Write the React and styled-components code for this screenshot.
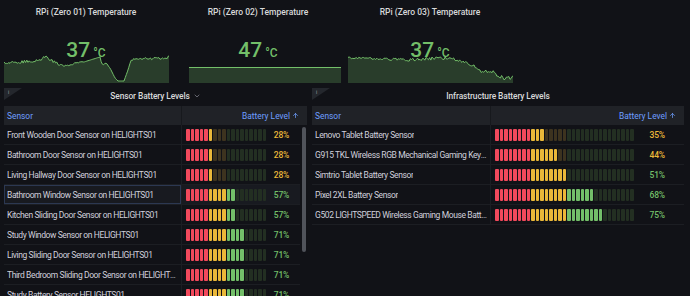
import styled, { createGlobalStyle } from "styled-components"
import { ArrowUp, ChevronDown } from "lucide-react"

const GlobalStyle = createGlobalStyle`
  html, body { margin:0; padding:0; background:#111217; }
  body { font-family: Roboto, "Liberation Sans", sans-serif; }
`

const Page = styled.div`
  width:690px;
  height:296px;
  overflow:hidden;
  background:#111217;
  color:#ccccdc;
  display:flex;
  flex-direction:column;
`
const StatRow = styled.div`
  display:flex;
  height:86px;
  flex-shrink:0;
`
const StatPanel = styled.div`
  width:172px;
  display:flex;
  flex-direction:column;
`
const StatTitle = styled.div`
  height:24px;
  display:flex;
  align-items:center;
  justify-content:center;
  font-size:8.5px;
  font-weight:500;
  color:#d8d9da;
`
const StatBody = styled.div`
  position:relative;
  flex:1;
  padding:0 3px 3px 4px;
  display:flex;
  align-items:flex-end;
`
const Spark = styled.svg`
  width:165px;
  height:31px;
  display:block;
`
const StatValue = styled.div`
  position:absolute;
  left:0;
  right:0;
  top:16px;
  text-align:center;
  color:#73bf69;
  font-size:21px;
  line-height:20px;
  font-weight:500;
`
const Unit = styled.span`
  font-size:12px;
  margin-left:3px;
`

const Bottom = styled.div`
  display:flex;
  gap:5px;
  padding-left:4px;
  flex:1;
  min-height:0;
`
const Panel = styled.div`
  position:relative;
  width:${(p) => p.$width}px;
  display:flex;
  flex-direction:column;
`
const PanelTitle = styled.div`
  height:20px;
  display:flex;
  align-items:center;
  justify-content:center;
  gap:3px;
  font-size:8.4px;
  font-weight:500;
  letter-spacing:-0.1px;
  color:#d8d9da;
`
const InfoCorner = styled.div`
  position:absolute;
  top:2px;
  left:0;
  width:18px;
  height:12px;
  background:#24272d;
  clip-path:polygon(0 0, 100% 0, 0 100%);
  font-size:5px;
  color:#9fa1a8;
  padding:2px 0 0 4px;
  box-sizing:border-box;
  line-height:5px;
`
const Header = styled.div`
  display:grid;
  grid-template-columns:${(p) => p.$first}px 1fr;
  height:19px;
  background:#202227;
  font-size:8.4px;
  color:#6e9fff;
`
const HeadCell = styled.div`
  display:flex;
  align-items:center;
  justify-content:${(p) => (p.$right ? "flex-end" : "flex-start")};
  gap:2px;
  padding:${(p) => (p.$right ? "0 8px 0 0" : "0 0 0 3px")};
  border-right:${(p) => (p.$right ? "none" : "1px solid #17191d")};
`
const Body = styled.div`
  display:flex;
  flex:1;
  min-height:0;
`
const Rows = styled.div`
  flex:1;
  display:flex;
  flex-direction:column;
`
const ScrollTrack = styled.div`
  width:7px;
  padding:2px 1px 0 2px;
  box-sizing:border-box;
`
const Thumb = styled.div`
  width:4px;
  height:125px;
  border-radius:2px;
  background:#50535a;
`
const Row = styled.div`
  display:grid;
  grid-template-columns:${(p) => p.$first}px 1fr;
  height:20px;
  flex-shrink:0;
  box-sizing:border-box;
  border-bottom:1px solid #1c1e23;
  background:${(p) => (p.$active ? "#181a20" : "transparent")};
  font-size:8.5px;
  letter-spacing:-0.4px;
`
const NameCell = styled.div`
  padding:0 3px;
  display:flex;
  align-items:center;
  border-right:1px solid #1c1e23;
  box-shadow:${(p) => (p.$active ? "inset 0 0 0 1px #2c3852" : "none")};
  min-width:0;
  color:#d0d0dc;
`
const NameText = styled.span`
  white-space:nowrap;
  overflow:hidden;
  text-overflow:ellipsis;
`
const GaugeCell = styled.div`
  display:flex;
  align-items:center;
  padding-left:4px;
`
const Cells = styled.div`
  display:flex;
  gap:1px;
`
const Cell = styled.div`
  width:3.5px;
  height:12px;
  border-radius:1px;
  background:${(p) => p.$color};
`
const Pct = styled.div`
  flex:1;
  text-align:center;
  padding-right:3px;
  font-size:8.5px;
  font-weight:500;
  letter-spacing:-0.2px;
  color:${(p) => p.$color};
`

const RED = "#f2495c"
const YELLOW = "#eab839"
const GREEN = "#73bf69"
const DIM = { [RED]: "#4a1f26", [YELLOW]: "#3d331f", [GREEN]: "#232f22" }

const rand = (i, seed) => {
  const v = Math.sin(i * 12.9898 + seed * 78.233) * 43758.5453
  return v - Math.floor(v)
}

// keys: [x, y, noise amplitude for the segment that starts here]
function buildSpark(keys, seed) {
  const pts = []
  let k = 0
  for (let x = 0; x <= 165; x += 1.2) {
    while (k < keys.length - 2 && keys[k + 1][0] < x) k++
    const [x0, y0, amp] = keys[k]
    const [x1, y1] = keys[k + 1]
    const t = Math.min(1, Math.max(0, (x - x0) / (x1 - x0)))
    let y = y0 + (y1 - y0) * t
    if (amp) {
      const r = rand(x * 3.1, seed)
      y += (r - 0.5) * amp * 2
      if (r > 0.88) y -= amp * 1.6
      if (r < 0.06) y += amp * 1.4
    }
    pts.push([x, Math.max(0.5, Math.min(30.5, y))])
  }
  pts.push([165, pts[pts.length - 1][1]])
  return pts
}

const toLine = (pts) => pts.map(([x, y], i) => `${i ? "L" : "M"}${x.toFixed(1)} ${y.toFixed(1)}`).join(" ")
const toArea = (pts) => `${toLine(pts)} L${pts[pts.length - 1][0]} 31 L${pts[0][0]} 31 Z`

const spark1 = buildSpark([
  [0, 11, 1.5], [15, 10, 2], [30, 9, 2], [38, 7, 2], [42, 4, 1.5], [46, 8, 2], [54, 12, 1.5],
  [60, 14, 1], [66, 13, 1.5], [72, 11, 1.5], [80, 10, 0], [96, 5, 0], [98, 13, 1], [102, 11, 0.5],
  [106, 16, 0], [111, 26, 0], [114, 29, 0], [120, 29, 0], [124, 18, 0], [127, 8, 1.5],
  [140, 7, 1.8], [155, 7, 1.8], [165, 5, 0],
], 1)

const spark3 = buildSpark([
  [0, 6, 1.2], [35, 7, 1.5], [60, 8, 2], [95, 6, 1.8], [110, 8, 1.8], [118, 11, 1.8],
  [126, 14, 1.8], [131, 19, 1.8], [145, 20, 2], [150, 24, 2.2], [158, 27, 2.2], [165, 25, 0],
], 3)

const spark2 = [[13, 15.5], [165, 15.5]]

const stats = [
  { title: "RPi (Zero 01) Temperature", value: 37, pts: spark1 },
  { title: "RPi (Zero 02) Temperature", value: 47, pts: spark2 },
  { title: "RPi (Zero 03) Temperature", value: 37, pts: spark3 },
]

const sensorRows = [
  { name: "Front Wooden Door Sensor on HELIGHTS01", pct: 28 },
  { name: "Bathroom Door Sensor on HELIGHTS01", pct: 28 },
  { name: "Living Hallway Door Sensor on HELIGHTS01", pct: 28 },
  { name: "Bathroom Window Sensor on HELIGHTS01", pct: 57, active: true },
  { name: "Kitchen Sliding Door Sensor on HELIGHTS01", pct: 57 },
  { name: "Study Window Sensor on HELIGHTS01", pct: 71 },
  { name: "Living Sliding Door Sensor on HELIGHTS01", pct: 71 },
  { name: "Third Bedroom Sliding Door Sensor on HELIGHTS01", pct: 71 },
  { name: "Study Battery Sensor HELIGHTS01", pct: 71 },
]

const infraRows = [
  { name: "Lenovo Tablet Battery Sensor", pct: 35 },
  { name: "G915 TKL Wireless RGB Mechanical Gaming Keyboard", pct: 44 },
  { name: "Simtrio Tablet Battery Sensor", pct: 51 },
  { name: "Pixel 2XL Battery Sensor", pct: 68 },
  { name: "G502 LIGHTSPEED Wireless Gaming Mouse Battery", pct: 75 },
]

const cellColor = (i, n) => {
  const f = (i + 0.5) / n
  if (f < 0.26) return RED
  if (f < 0.51) return YELLOW
  return GREEN
}
const pctColor = (pct) => (pct < 50 ? YELLOW : GREEN)

const Gauge = ({ pct, count }) => {
  const lit = Math.ceil((pct * count) / 100)
  return (
    <GaugeCell>
      <Cells>
        {Array.from({ length: count }, (_, i) => {
          const c = cellColor(i, count)
          return <Cell key={i} $color={i < lit ? c : DIM[c]} />
        })}
      </Cells>
      <Pct $color={pctColor(pct)}>{pct}%</Pct>
    </GaugeCell>
  )
}

const BatteryTable = ({ title, rows, first, count, scroll, chevron }) => (
  <>
    <InfoCorner>i</InfoCorner>
    <PanelTitle>
      {title}
      {chevron && <ChevronDown size={8} color="#8e8e9a" strokeWidth={2} />}
    </PanelTitle>
    <Header $first={first}>
      <HeadCell>Sensor</HeadCell>
      <HeadCell $right>
        Battery Level <ArrowUp size={7} strokeWidth={2.5} />
      </HeadCell>
    </Header>
    <Body>
      <Rows>
        {rows.map((r) => (
          <Row key={r.name} $first={first} $active={r.active}>
            <NameCell $active={r.active}>
              <NameText>{r.name}</NameText>
            </NameCell>
            <Gauge pct={r.pct} count={count} />
          </Row>
        ))}
      </Rows>
      {scroll && (
        <ScrollTrack>
          <Thumb />
        </ScrollTrack>
      )}
    </Body>
  </>
)

export default function App() {
  return (
    <Page>
      <GlobalStyle />
      <StatRow>
        {stats.map((s) => (
          <StatPanel key={s.title}>
            <StatTitle>{s.title}</StatTitle>
            <StatBody>
              <Spark viewBox="0 0 165 31" preserveAspectRatio="none">
                <path d={toArea(s.pts)} fill="rgba(115,191,105,0.25)" />
                <path d={toLine(s.pts)} fill="none" stroke={GREEN} strokeWidth="1" strokeLinejoin="round" />
              </Spark>
              <StatValue>
                {s.value}
                <Unit>°C</Unit>
              </StatValue>
            </StatBody>
          </StatPanel>
        ))}
      </StatRow>
      <Bottom>
        <Panel $width={303}>
          <BatteryTable title="Sensor Battery Levels" rows={sensorRows} first={178} count={18} scroll chevron />
        </Panel>
        <Panel $width={372}>
          <BatteryTable title="Infrastructure Battery Levels" rows={infraRows} first={179} count={31} />
        </Panel>
      </Bottom>
    </Page>
  )
}
